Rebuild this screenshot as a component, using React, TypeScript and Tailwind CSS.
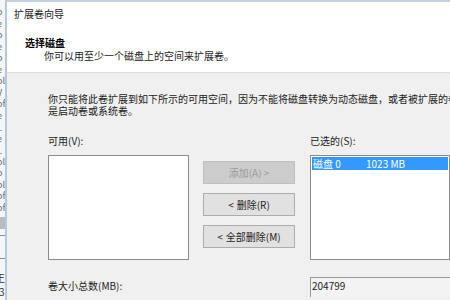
import React from 'react'

const font = { fontFamily: '"Noto Sans CJK SC", "Noto Sans", sans-serif' }

const behindRows = ['o', 'e', 'o', 'e', 'o', 'e', 'ol', 'V', 'of', 'e', '_', 'e', '_', 'ol', 'o', 'ol', 'of', 'of']

const App = () => {
  return (
    <div className='w-[450px] h-[300px] overflow-hidden flex bg-[#f0f0f0] text-[10px] leading-[12px] text-[#1a1a1a]' style={font}>
      {/* window behind, cut at the left edge */}
      <div className='w-[5px] shrink-0 bg-[#f4f6f9] overflow-hidden flex flex-col pt-[6px]'>
        {behindRows.map((c, i) => (
          <div key={i} className='h-[11.5px] -ml-[3px] text-[9px] text-[#606a78] leading-[11px]'>{c}</div>
        ))}
        <div className='mt-[4px] h-[12px] bg-[#b8bcc2]' />
        <div className='mt-[6px] h-[1px] bg-[#8a8f96]' />
        <div className='mt-[22px] h-[1px] bg-[#8a8f96]' />
        <div className='mt-[12px] h-[14px] -ml-[5px] text-[10px] leading-[14px] text-[#333]'>王</div>
        <div className='h-[14px] -ml-[1px] text-[10px] leading-[14px] text-[#333]'>3</div>
      </div>
      <div className='w-[2px] shrink-0 bg-[#b7c8da]' />

      {/* wizard window */}
      <div className='flex-1 flex flex-col border-t-2 border-[#c3d2e1] min-w-0'>
        <div className='bg-white h-[71px] shrink-0 border-b border-[#dcdcdc]'>
          <div className='pl-[7px] pt-[6px] text-[#222]'>扩展卷向导</div>
          <div className='pl-[18px] pt-[17px] font-bold text-black'>选择磁盘</div>
          <div className='pl-[37px] pt-[1px] text-[#222]'>你可以用至少一个磁盘上的空间来扩展卷。</div>
        </div>

        <div className='flex-1 pl-[41px] pt-[20px] whitespace-nowrap'>
          <div className='text-[#222]'>你只能将此卷扩展到如下所示的可用空间，因为不能将磁盘转换为动态磁盘，或者被扩展的卷</div>
          <div className='text-[#222]'>是启动卷或系统卷。</div>

          <div className='flex mt-[18px]'>
            <div className='w-[141px] shrink-0'>
              <div className='text-[#222]'>可用(V):</div>
              <div className='mt-[8px] h-[105px] bg-white border border-[#8c8c8c]' />
            </div>

            <div className='w-[92px] shrink-0 ml-[14px] pt-[26px] flex flex-col gap-[9px]'>
              <div className='h-[23px] bg-[#cccccc] border border-[#bfbfbf] text-[#9a9a9a] flex items-center justify-center'>添加(A) &gt;</div>
              <div className='h-[23px] bg-[#e1e1e1] border border-[#adadad] text-[#222] flex items-center justify-center gap-[3px]'><span>&lt;</span><span>删除(R)</span></div>
              <div className='h-[23px] bg-[#e1e1e1] border border-[#adadad] text-[#222] flex items-center justify-center gap-[3px]'><span>&lt;</span><span>全部删除(M)</span></div>
            </div>

            <div className='flex-1 ml-[15px] min-w-0'>
              <div className='text-[#222]'>已选的(S):</div>
              <div className='mt-[8px] h-[105px] bg-white border border-[#8c8c8c] p-px'>
                <div className='h-[13px] bg-[#3399ff] text-white flex items-center'>
                  <span className='pl-px w-[54px]'>磁盘 0</span>
                  <span>1023 MB</span>
                </div>
              </div>
            </div>
          </div>

          <div className='flex mt-[17px]'>
            <div className='w-[262px] shrink-0 pt-[3px] text-[#222]'>卷大小总数(MB):</div>
            <div className='flex-1 h-[20px] border-t border-l border-[#9a9a9a] bg-[#f3f3f3] pl-px pt-[2px] text-[#222]'>204799</div>
          </div>
        </div>
      </div>
    </div>
  )
}

export default App
